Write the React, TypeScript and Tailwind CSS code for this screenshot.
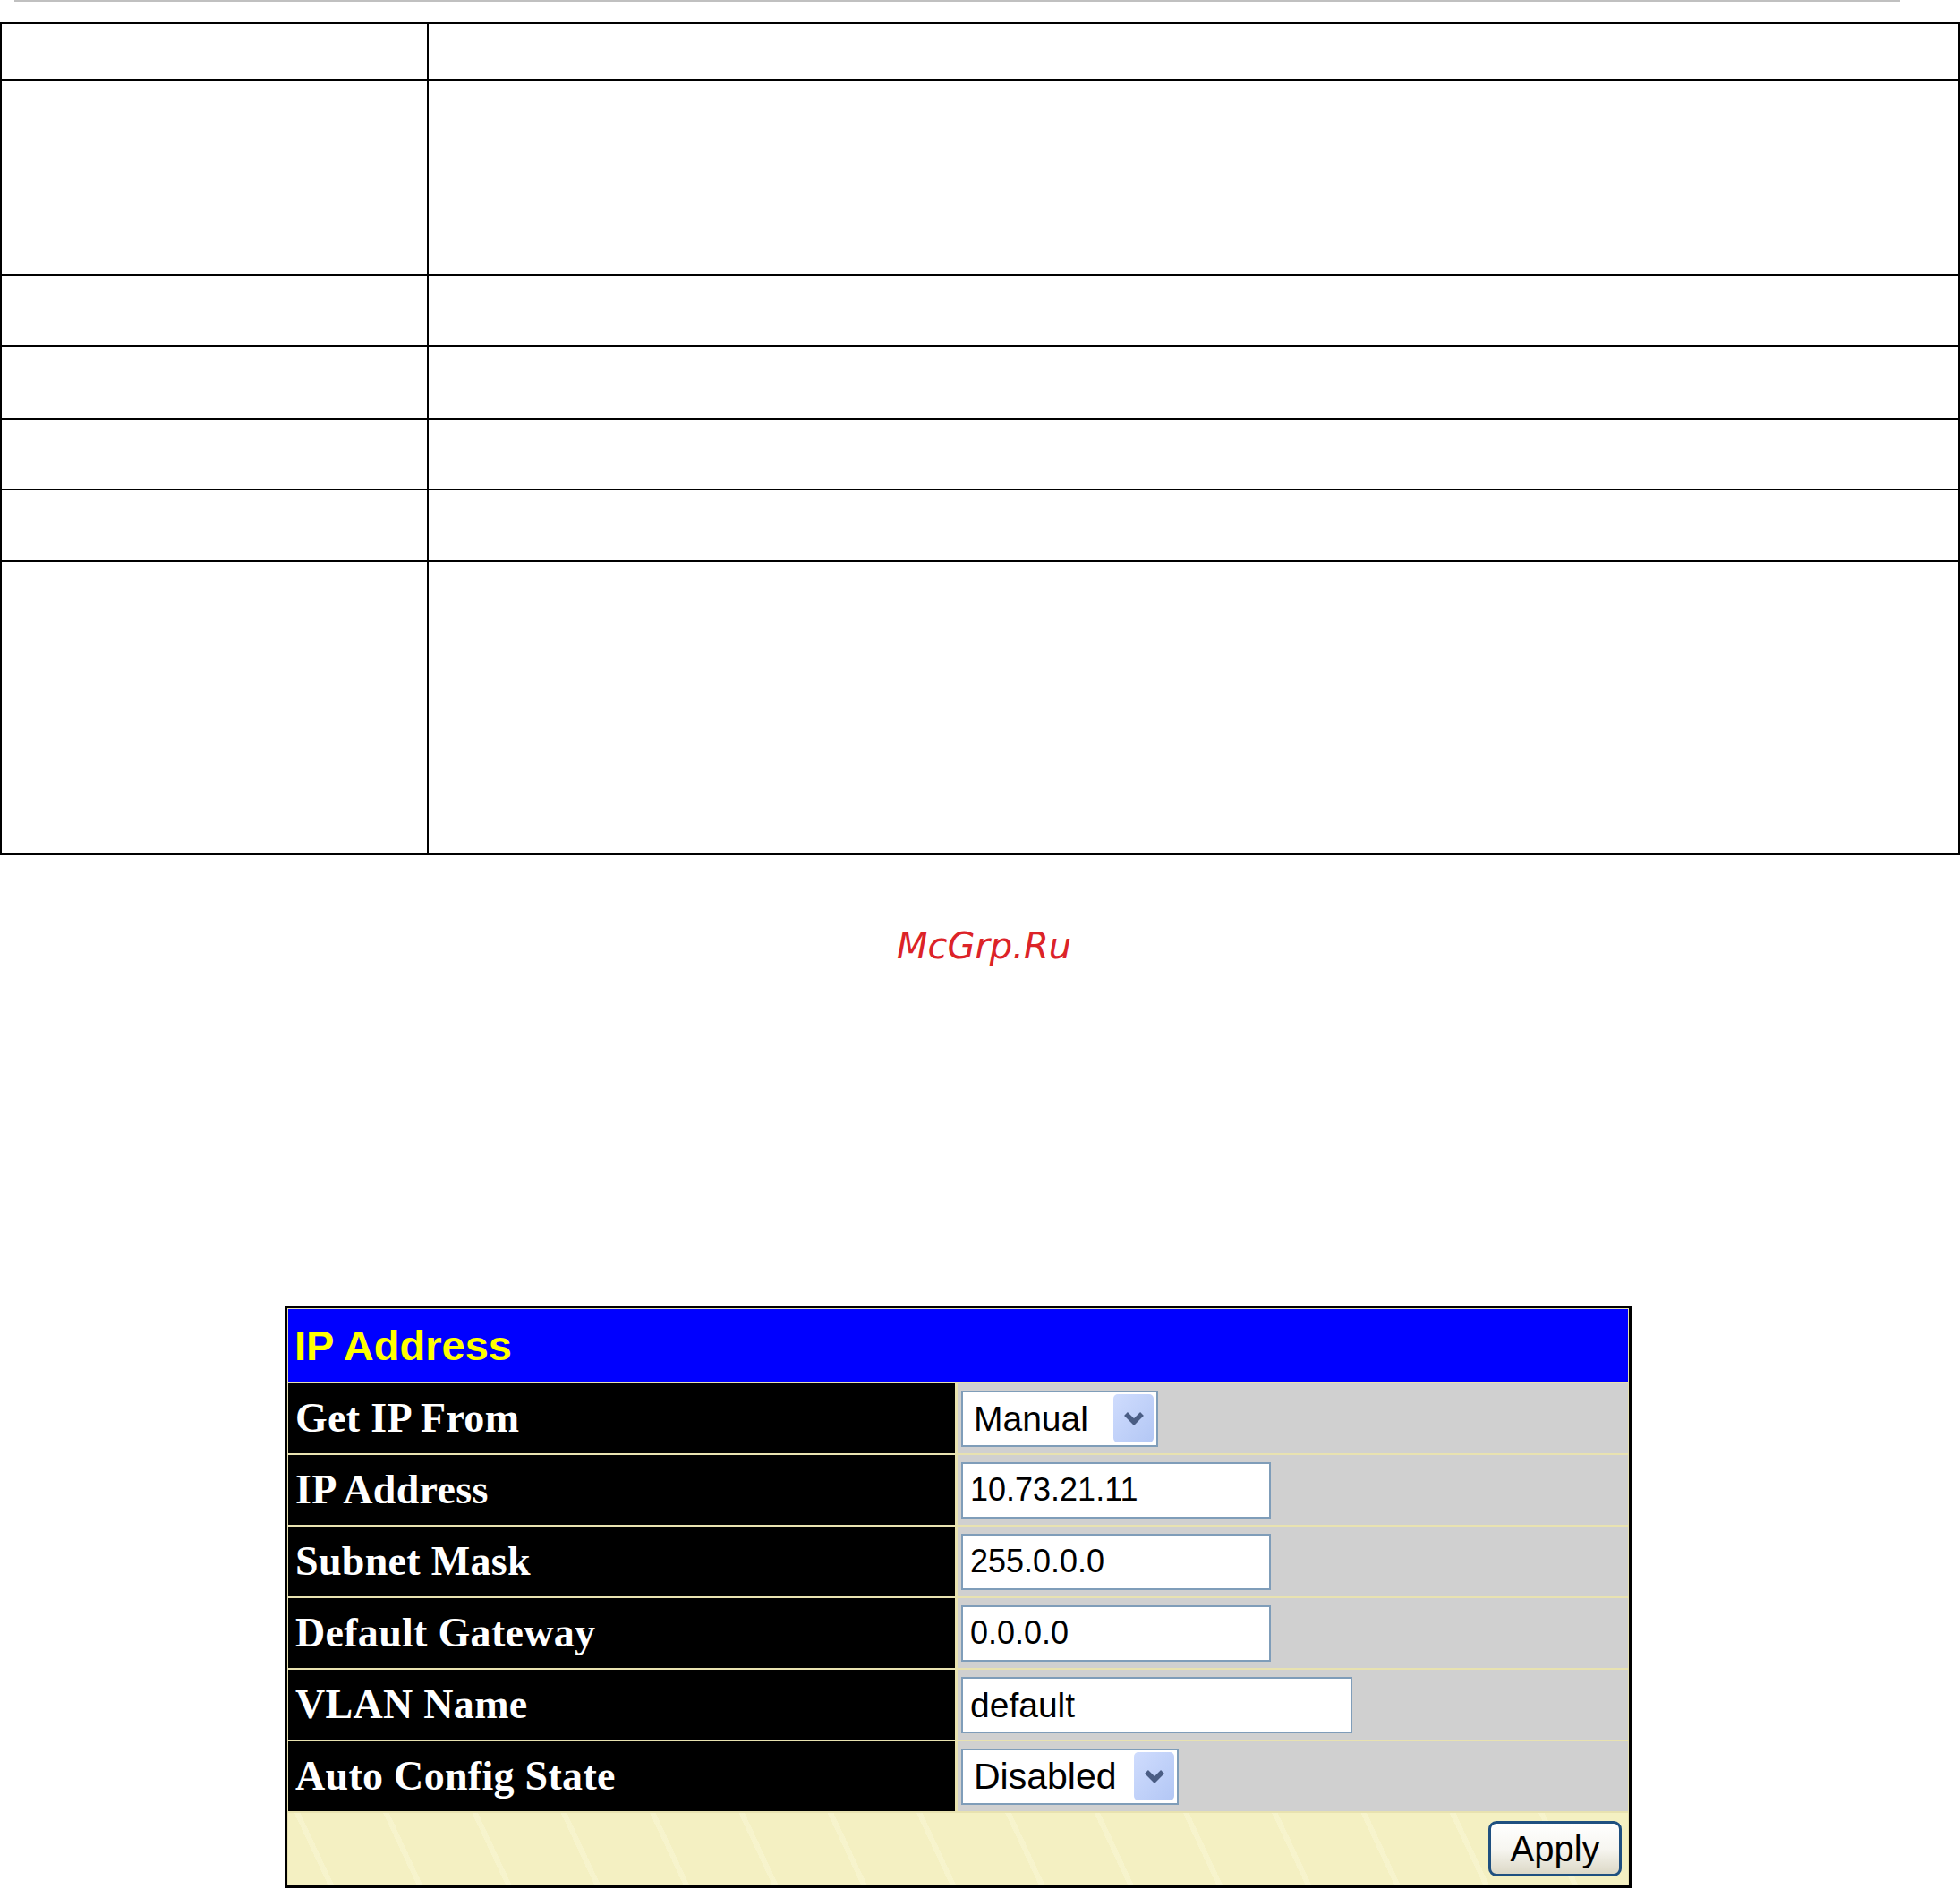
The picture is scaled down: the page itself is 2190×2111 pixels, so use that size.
import React from "react";

const topRows = [63, 218, 80, 81, 79, 80, 327];

function Chevron() {
  return (
    <svg width="26" height="18" viewBox="0 0 26 18">
      <path d="M4 4 L13 13 L22 4" fill="none" stroke="#4a5d84" strokeWidth="5.5" strokeLinejoin="miter" />
    </svg>
  );
}

function Select({ value, width, size }: { value: string; width: string; size: string }) {
  return (
    <div className={`${width} h-[63px] border-2 border-[#7f9db9] bg-white flex items-center justify-between pl-[12px] pr-[3px]`}>
      <span className={`${size} leading-none text-black font-['Liberation_Sans',Arial,sans-serif]`}>{value}</span>
      <div className="w-[45px] h-[54px] rounded-[5px] bg-gradient-to-br from-[#cfdcfd] to-[#b3c7f5] flex items-center justify-center">
        <Chevron />
      </div>
    </div>
  );
}

function TextBox({ value, width, size }: { value: string; width: string; size: string }) {
  return (
    <div className={`${width} h-[63px] border-2 border-[#7f9db9] bg-white flex items-center pl-[8px]`}>
      <span className={`${size} leading-none text-black font-['Liberation_Sans',Arial,sans-serif]`}>{value}</span>
    </div>
  );
}

const rows: { label: string; field: React.ReactNode }[] = [
  { label: "Get IP From", field: <Select value="Manual" width="w-[220px]" size="text-[39px]" /> },
  { label: "IP Address", field: <TextBox value="10.73.21.11" width="w-[346px]" size="text-[36px]" /> },
  { label: "Subnet Mask", field: <TextBox value="255.0.0.0" width="w-[346px]" size="text-[36px]" /> },
  { label: "Default Gateway", field: <TextBox value="0.0.0.0" width="w-[346px]" size="text-[36px]" /> },
  { label: "VLAN Name", field: <TextBox value="default" width="w-[437px]" size="text-[39px]" /> },
  { label: "Auto Config State", field: <Select value="Disabled" width="w-[243px]" size="text-[41px]" /> },
];

export default function App() {
  return (
    <div className="w-[2190px] h-[2111px] bg-white overflow-hidden">
      <div className="ml-[16px] w-[2107px] h-[2px] bg-[#c0c0c0]" />

      <div className="mt-[23px] border-t-2 border-x-2 border-black">
        {topRows.map((h, i) => (
          <div key={i} className="flex border-b-2 border-black" style={{ height: h }}>
            <div className="w-[477px] border-r-2 border-black" />
            <div className="flex-1" />
          </div>
        ))}
      </div>

      <div className="mt-[82px] flex justify-center pl-[9px]">
        <span className="text-[40px] leading-none italic text-[#dc2328] font-['DejaVu_Sans',sans-serif]">McGrp.Ru</span>
      </div>

      <div className="mt-[382px] ml-[318px] w-[1505px] border-[3px] border-black">
        <div className="p-[1px] bg-[#e8e2b0] flex flex-col gap-[2px]">
          <div className="h-[81px] bg-[#0000ff] flex items-center pl-[7px]">
            <span className="text-[47px] leading-none font-bold text-[#ffff00] font-['Liberation_Sans',Arial,sans-serif]">IP Address</span>
          </div>
          {rows.map((r) => (
            <div key={r.label} className="h-[78px] grid grid-cols-[745px_1fr] gap-x-[3px]">
              <div className="bg-black flex items-center pl-[8px]">
                <span className="text-[46px] leading-none font-bold text-white tracking-[0.3px] font-['Liberation_Serif','Times_New_Roman',serif]">{r.label}</span>
              </div>
              <div className="bg-[#d0d0d0] flex items-center pl-[4px]">{r.field}</div>
            </div>
          ))}
          <div className="h-[80px] bg-[#f4f0c2] bg-[repeating-linear-gradient(65deg,transparent_0px,transparent_40px,rgba(255,255,235,0.25)_40px,rgba(255,255,235,0.25)_46px,transparent_46px,transparent_90px)] flex items-center justify-end pr-[7px]">
            <button className="w-[149px] h-[62px] border-[3px] border-[#1f5080] rounded-[9px] bg-gradient-to-b from-white via-[#f7f6f1] to-[#dcd8c6] flex items-center justify-center">
              <span className="text-[40px] leading-none text-black font-['Liberation_Sans',Arial,sans-serif]">Apply</span>
            </button>
          </div>
        </div>
      </div>
    </div>
  );
}
